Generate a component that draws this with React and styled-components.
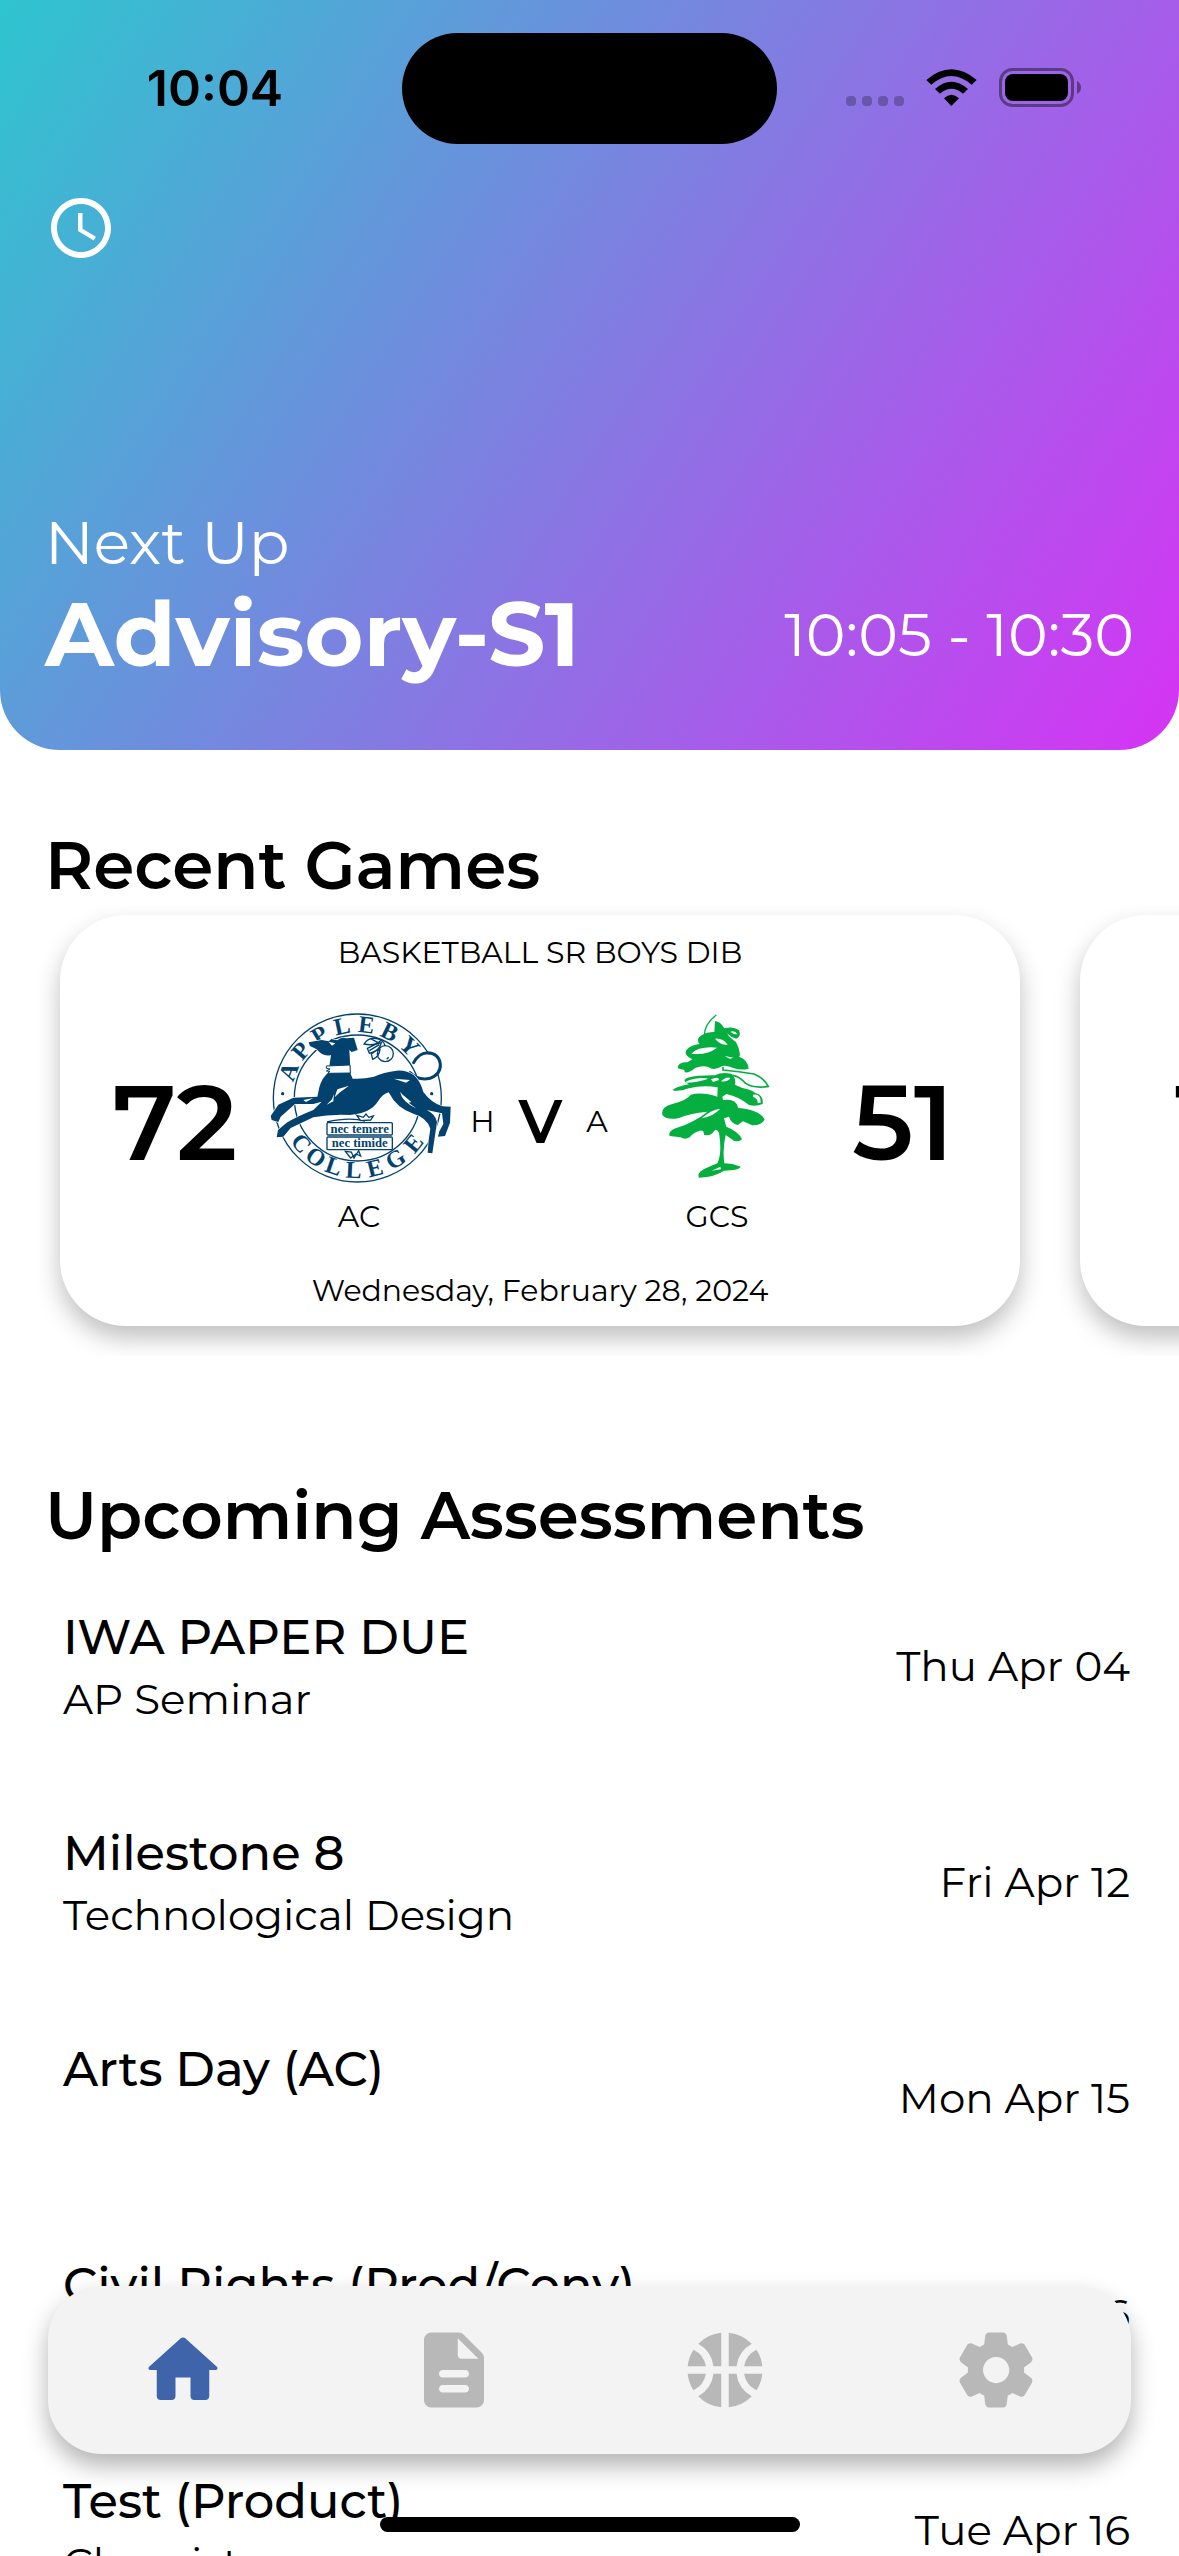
import React from "react";
import styled, { createGlobalStyle } from "styled-components";
import { MdAccessTime, MdSportsBasketball } from "react-icons/md";

const GlobalStyle = createGlobalStyle`
  *, *::before, *::after { box-sizing: border-box; }
  body {
    margin: 0;
    background: #fff;
    color: #000;
    font-family: Montserrat, Inter, "Open Sans", sans-serif;
  }
  h1, h2, h3, p, ul { margin: 0; padding: 0; font-weight: inherit; }
  button { border: 0; padding: 0; background: none; cursor: pointer; }
`;

const Screen = styled.div`
  height: 100vh;
  overflow: hidden;
`;

/* Header */

const Header = styled.header`
  min-height: 750px;
  display: flex;
  flex-direction: column;
  padding-bottom: 61px;
  border-radius: 0 0 60px 60px;
  background: linear-gradient(122.5deg, #2ec5cf, #d633f4);
`;

const StatusBar = styled.div`
  display: grid;
  grid-template-columns: 1fr 375px 1fr;
  align-items: center;
  padding: 33px 0 48px;
`;

const StatusTime = styled.time`
  padding: 0 0 2px 28px;
  text-align: center;
  font: 600 50px/60px Inter, sans-serif;
`;

const Island = styled.div`
  height: 111px;
  border-radius: 56px;
  background: #000;
`;

const StatusIcons = styled.div`
  display: flex;
  justify-content: center;
  gap: 22px;
  padding: 0 30px 2px 0;
`;

const ScheduleButton = styled.button`
  align-self: flex-start;
  display: flex;
  margin-left: 45px;
  color: #fff;
  font-size: 72px;
`;

const NextUp = styled.section`
  margin-top: auto;
  padding: 0 45px;
  color: #fff;
`;

const NextLabel = styled.p`
  font-size: 60px;
  font-weight: 400;
  line-height: 73px;
`;

const NextRow = styled.div`
  display: flex;
  align-items: center;
  justify-content: space-between;
`;

const NextTitle = styled.h1`
  font-size: 90px;
  font-weight: 700;
  line-height: 110px;
`;

/* Sections */

const SectionTitle = styled.h2`
  padding: 0 45px;
  font-size: 66px;
  font-weight: 600;
  line-height: 80px;
`;

const Games = styled.section`
  padding-top: 76px;
`;

const GameScroller = styled.div`
  display: flex;
  gap: 60px;
  padding: 9px 0 30px 60px;
  overflow-x: auto;
  overflow-y: hidden;
  scrollbar-width: none;
`;

const GameCard = styled.article`
  flex: 0 0 calc(100% - 159px);
  display: flex;
  flex-direction: column;
  gap: 37px;
  padding: 19px 0 17px;
  border-radius: 66px;
  background: #fff;
  box-shadow: 0 12px 24px rgba(0, 0, 0, 0.25);
`;

const Small = styled.p`
  min-height: 37px;
  text-align: center;
  font-size: 30px;
  font-weight: 400;
  line-height: 37px;
`;

const Matchup = styled.div`
  display: grid;
  grid-template-columns: 182fr 186fr 174fr 182fr 190fr;
  align-items: center;
  min-height: 227px;
  padding: 0 22px 0 24px;
`;

const Score = styled.p`
  text-align: center;
  font-size: 105px;
  font-weight: 600;
  line-height: 128px;
`;

const Team = styled.div`
  display: flex;
  flex-direction: column;
  align-items: center;
  gap: 10px;
`;

const Crest = styled.svg`
  width: 180px;
  height: 180px;
  overflow: visible;
`;

const Versus = styled.div`
  display: flex;
  align-items: center;
  justify-content: center;
  gap: 24px;
`;

const VersusMark = styled.p`
  font-size: 60px;
  font-weight: 600;
  line-height: 73px;
`;

const Assessments = styled.section`
  padding-top: 120px;
`;

const AssessmentList = styled.ul`
  list-style: none;
  padding-top: 2px;
`;

const AssessmentRow = styled.li`
  display: flex;
  align-items: center;
  justify-content: space-between;
  height: 216px;
  padding: 0 49px 0 63px;
`;

const AssessmentTitle = styled.h3`
  margin-bottom: 8px;
  font-size: 48px;
  font-weight: 500;
  line-height: 58px;
`;

const Detail = styled.p`
  min-height: 51px;
  font-size: 42px;
  font-weight: 400;
  line-height: 51px;
`;

/* Overlays */

const TabBar = styled.nav`
  position: fixed;
  left: 48px;
  right: 48px;
  bottom: 102px;
  display: flex;
  height: 168px;
  border-radius: 54px;
  background: #f3f3f3;
  box-shadow: 0 12px 24px rgba(0, 0, 0, 0.3);
`;

const Tab = styled.button`
  flex: 1;
  display: flex;
  align-items: center;
  justify-content: center;
  color: ${(p) => (p.$active ? "#4064a9" : "#b8b8b8")};

  svg {
    width: 90px;
    height: 90px;
    fill: currentColor;
  }
`;

const HomeIndicator = styled.div`
  position: fixed;
  left: 50%;
  bottom: 24px;
  width: 420px;
  height: 15px;
  margin-left: -210px;
  border-radius: 8px;
  background: #000;
`;

const Dots = () => (
  <svg width="58" height="40" aria-hidden="true">
    {[0, 16, 32, 48].map((x) => (
      <rect key={x} x={x} y="28" width="10" height="10" rx="4" fill="#000" fillOpacity=".25" />
    ))}
  </svg>
);

const Wifi = () => (
  <svg width="51" height="40" viewBox="0 0 153 120" aria-hidden="true">
    <path d="M1 36Q76-28 152 36L137 50Q76-2 16 50Z" />
    <path d="M27 63Q76 19 126 63L111 77Q76 48 42 77Z" />
    <path d="M54 91Q76 70 99 91L76 114Z" />
  </svg>
);

const Battery = () => (
  <svg width="82" height="40" aria-hidden="true">
    <rect x="1.5" y="1.5" width="72" height="36" rx="12" fill="none" stroke="#000" strokeOpacity=".42" strokeWidth="3" />
    <rect x="6" y="6" width="63" height="27" rx="8" />
    <path d="M78 13q4 2 4 6.5t-4 6.5z" fillOpacity=".42" />
  </svg>
);

const topLetters = [["A", -69], ["P", -50], ["P", -31], ["L", -12], ["E", 7], ["B", 26], ["Y", 45]];
const bottomLetters = [["C", -51], ["O", -35], ["L", -19], ["L", -3], ["E", 14], ["G", 32], ["E", 51]];

const ApplebyCrest = () => (
  <Crest viewBox="57 24 540 540" fill="#03426f" role="img" aria-label="Appleby College">
    <g fill="none" stroke="#03426f" strokeWidth="4">
      <circle cx="322" cy="294" r="252" />
      <circle cx="322" cy="294" r="189" />
    </g>
    <g fontFamily='"Liberation Serif", serif' fontWeight="700" fontSize="72" textAnchor="middle">
      {topLetters.map(([c, a], i) => (
        <text key={i} x="322" y="97" transform={`rotate(${a} 322 294)`}>{c}</text>
      ))}
      {bottomLetters.map(([c, a], i) => (
        <text key={i} x="322" y="534" transform={`rotate(${-a} 322 294)`}>{c}</text>
      ))}
    </g>
    <circle cx="98" cy="281" r="5" />
    <circle cx="545" cy="281" r="5" />
    <circle cx="533" cy="197" r="34" fill="#fff" />
    <path
      d="M480 218Q505 243 540 235Q573 222 571 192Q567 160 532 158Q505 160 491 188"
      fill="none" stroke="#03426f" strokeWidth="9" strokeLinecap="round"
    />
    <path
      stroke="#fff" strokeWidth="4" paintOrder="stroke"
      d="M176 127L215 120L236 124L244 117L262 121Q272 110 290 115L312 113L323 150L305 156L298 150L302 222L308 236Q340 238 372 230Q400 216 440 212Q470 210 492 226Q512 245 520 276Q545 310 578 319L602 320L600 368L585 408L564 410L568 394L580 372L576 340L530 330Q556 342 561 366L556 400L547 460L533 458L536 420L541 386Q530 352 490 341Q440 325 416 277Q398 282 384 304Q362 340 300 345Q240 342 190 352L122 384L100 410L80 412L84 390L110 368Q140 350 190 330L215 305L190 312L135 312L92 350L85 366L65 360L62 348L85 314L130 293L202 290L208 262Q216 232 235 218L243 165Q220 172 200 148L180 138Z"
    />
    <g fill="#fff">
      <path d="M229 198L300 195L301 219L233 220L240 214L229 213L240 207L229 205Z" stroke="#03426f" strokeWidth="3" />
      <path d="M297 257L262 268L254 292L268 278ZM252 282L246 298L230 314L250 304ZM432 236L468 248L480 240ZM450 275Q456 305 500 326L476 308L484 306L458 284ZM160 300L190 294L168 306ZM236 125L256 130L246 137Z" />
    </g>
    <g fill="none" stroke="#03426f" strokeWidth="4">
      <circle cx="406" cy="161" r="24" fill="#fff" />
      <path d="M342 132Q360 105 394 120Q375 140 342 132ZM352 145Q375 132 394 128Q390 152 358 160ZM364 162Q378 150 390 148Q388 170 368 178ZM392 120Q402 125 405 138M360 115L384 128M358 152L388 134" />
      <path d="M410 178L416 172" />
      <path d="M320 346L340 352L348 342L356 352L370 348L362 360L332 362ZM286 454L304 456L312 474L326 452L332 468L318 462L302 474ZM231 366Q300 350 345 364" />
      <rect x="231" y="368" width="196" height="37" rx="3" fill="#fff" />
      <rect x="231" y="411" width="196" height="38" rx="3" fill="#fff" />
    </g>
    <g fontFamily='"Liberation Serif", serif' fontWeight="700" fontSize="38" textAnchor="middle">
      <text x="329" y="398">nec temere</text>
      <text x="329" y="441">nec timide</text>
    </g>
  </Crest>
);

const TreeCrest = () => (
  <Crest viewBox="-36 24 540 540" fill="#04af40" role="img" aria-label="GCS">
    <path d="M232 45Q194 74 197 108" fill="none" stroke="#04af40" strokeWidth="4" />
    <path d="M228 64Q242 62 256 85Q282 78 300 90Q308 110 292 116Q275 112 264 100Q272 114 290 125Q300 140 303 165L300 170Q326 178 329 206Q308 212 285 205Q265 195 250 198Q225 214 208 201Q190 195 168 204Q152 219 138 217L135 209Q112 208 117 198Q125 185 145 187L160 178Q134 166 142 150Q155 135 182 132Q168 116 190 104Q205 95 226 96Z" />
    <path d="M100 270Q118 258 150 253Q125 240 146 233Q180 225 228 226Q250 214 278 222Q292 235 288 254L310 264Q340 270 350 280Q374 285 371 312Q350 320 330 315Q300 290 262 282L250 290L252 300Q292 294 298 324Q362 330 377 358Q368 377 340 376L312 364L296 375Q276 370 270 350L255 355L262 380Q300 395 309 418Q300 427 285 422L260 405Q250 450 256 490Q280 490 305 500Q302 510 255 512Q230 530 180 533Q172 518 200 505L235 490Q250 460 240 398Q230 380 222 398Q208 410 195 404Q195 388 180 393Q160 400 152 412Q138 420 125 412L92 408Q86 395 110 385Q170 365 205 335Q150 340 120 354Q85 362 70 345Q65 320 100 312Q145 300 155 284Q190 275 235 290L236 262Q190 255 150 265Q115 277 100 270Z" />
    <path d="M252 200V210Q300 214 345 222Q375 234 388 259Q345 266 320 250Q300 228 280 226" fill="none" stroke="#04af40" strokeWidth="5" />
    <g fill="#fff">
      <path d="M157 161Q180 138 234 143Q205 166 157 161ZM228 116Q252 114 266 134Q244 136 228 116ZM274 95Q288 90 295 103Q284 104 274 95ZM257 168L284 173L272 176ZM142 244Q180 230 208 236Q172 248 142 248ZM216 238Q240 228 240 240L222 246ZM246 244Q262 228 274 234Q268 246 246 244ZM188 355Q215 330 244 326Q224 348 188 355ZM342 284Q366 280 365 308L356 310Q358 296 342 290ZM218 512L244 500L246 508Z" />
    </g>
  </Crest>
);

const HomeIcon = () => (
  <svg viewBox="0 0 24 24">
    <path d="M10 19v-5h4v5c0 .55.45 1 1 1h3c.55 0 1-.45 1-1v-7h1.7c.46 0 .68-.57.33-.87L12.67 3.6c-.38-.34-.96-.34-1.34 0l-8.36 7.53c-.34.3-.13.87.33.87H5v7c0 .55.45 1 1 1h3c.55 0 1-.45 1-1z" />
  </svg>
);

const DocumentIcon = () => (
  <svg viewBox="0 0 24 24">
    <path d="M14.59 2.59c-.38-.38-.89-.59-1.42-.59H6c-1.1 0-2 .9-2 2v16c0 1.1.89 2 1.99 2H18c1.1 0 2-.9 2-2V8.83c0-.53-.21-1.04-.59-1.41l-4.82-4.83zM15 18H9c-.55 0-1-.45-1-1s.45-1 1-1h6c.55 0 1 .45 1 1s-.45 1-1 1zm0-4H9c-.55 0-1-.45-1-1s.45-1 1-1h6c.55 0 1 .45 1 1s-.45 1-1 1zm-2-6V3.5L18.5 9H14c-.55 0-1-.45-1-1z" />
  </svg>
);

const SettingsIcon = () => (
  <svg viewBox="0 0 24 24">
    <path d="M19.5 12c0-.23-.01-.45-.03-.68l1.86-1.41c.4-.3.51-.86.26-1.3l-1.87-3.23c-.25-.44-.79-.62-1.25-.42l-2.15.91c-.37-.26-.76-.49-1.17-.68l-.29-2.31c-.06-.5-.49-.88-.99-.88h-3.73c-.51 0-.94.38-1 .88l-.29 2.31c-.41.19-.8.42-1.17.68l-2.15-.91c-.46-.2-1-.02-1.25.42L2.41 8.62c-.25.44-.14.99.26 1.3l1.86 1.41a7.343 7.343 0 000 1.35l-1.86 1.41c-.4.3-.51.86-.26 1.3l1.87 3.23c.25.44.79.62 1.25.42l2.15-.91c.37.26.76.49 1.17.68l.29 2.31c.06.5.49.88.99.88h3.73c.5 0 .93-.38.99-.88l.29-2.31c.41-.19.8-.42 1.17-.68l2.15.91c.46.2 1 .02 1.25-.42l1.87-3.23c.25-.44.14-.99-.26-1.3l-1.86-1.41c.03-.23.04-.45.04-.68zm-7.46 3.5c-1.93 0-3.5-1.57-3.5-3.5s1.57-3.5 3.5-3.5 3.5 1.57 3.5 3.5-1.57 3.5-3.5 3.5z" />
  </svg>
);

const assessments = [
  { title: "IWA PAPER DUE", course: "AP Seminar", date: "Thu Apr 04" },
  { title: "Milestone 8", course: "Technological Design", date: "Fri Apr 12" },
  { title: "Arts Day (AC)", course: "", date: "Mon Apr 15" },
  { title: "Civil Rights (Prod/Conv)", course: "", date: "Tue Apr 16" },
  { title: "Test (Product)", course: "Chemistry", date: "Tue Apr 16" },
];

const tabs = [
  { label: "Home", Icon: HomeIcon },
  { label: "Assessments", Icon: DocumentIcon },
  { label: "Games", Icon: MdSportsBasketball },
  { label: "Settings", Icon: SettingsIcon },
];

export default function App() {
  return (
    <Screen>
      <GlobalStyle />
      <Header>
        <StatusBar>
          <StatusTime>10:04</StatusTime>
          <Island />
          <StatusIcons>
            <Dots />
            <Wifi />
            <Battery />
          </StatusIcons>
        </StatusBar>
        <ScheduleButton aria-label="Schedule">
          <MdAccessTime />
        </ScheduleButton>
        <NextUp>
          <NextLabel>Next Up</NextLabel>
          <NextRow>
            <NextTitle>Advisory-S1</NextTitle>
            <NextLabel>10:05 - 10:30</NextLabel>
          </NextRow>
        </NextUp>
      </Header>

      <main>
        <Games>
          <SectionTitle>Recent Games</SectionTitle>
          <GameScroller>
            <GameCard>
              <Small>BASKETBALL SR BOYS DIB</Small>
              <Matchup>
                <Score>72</Score>
                <Team>
                  <ApplebyCrest />
                  <Small>AC</Small>
                </Team>
                <Versus>
                  <Small>H</Small>
                  <VersusMark>V</VersusMark>
                  <Small>A</Small>
                </Versus>
                <Team>
                  <TreeCrest />
                  <Small>GCS</Small>
                </Team>
                <Score>51</Score>
              </Matchup>
              <Small>Wednesday, February 28, 2024</Small>
            </GameCard>
            <GameCard>
              <Small />
              <Matchup>
                <Score>1</Score>
              </Matchup>
              <Small />
            </GameCard>
          </GameScroller>
        </Games>

        <Assessments>
          <SectionTitle>Upcoming Assessments</SectionTitle>
          <AssessmentList>
            {assessments.map((item) => (
              <AssessmentRow key={item.title}>
                <div>
                  <AssessmentTitle>{item.title}</AssessmentTitle>
                  <Detail>{item.course}</Detail>
                </div>
                <Detail>{item.date}</Detail>
              </AssessmentRow>
            ))}
          </AssessmentList>
        </Assessments>
      </main>

      <TabBar>
        {tabs.map(({ label, Icon }, i) => (
          <Tab key={label} $active={i === 0} aria-label={label}>
            <Icon />
          </Tab>
        ))}
      </TabBar>
      <HomeIndicator />
    </Screen>
  );
}
